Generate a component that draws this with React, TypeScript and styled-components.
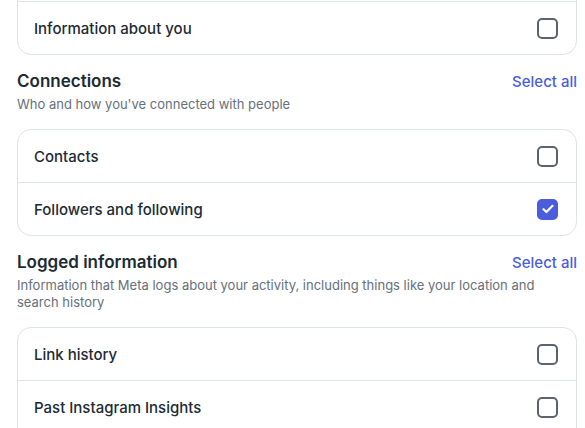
import React, { FC } from 'react'
import styled, { createGlobalStyle } from 'styled-components';

const GlobalStyle = createGlobalStyle`
    html, body {
        margin: 0;
        padding: 0;
        background: #ffffff;
        overflow: hidden;
    }
    body {
        font-family: Inter, "Noto Sans", "Liberation Sans", sans-serif;
        color: #1c2b33;
        -webkit-font-smoothing: antialiased;
    }
`

/* layout */
const Page = styled.div`
    display: flex;
    flex-direction: column;
    padding: 0 8px 0 17px;
`
const Card = styled.div<{ $pulled?: boolean }>`
    display: flex;
    flex-direction: column;
    border: 1px solid #dee3e9;
    border-radius: 14px;
    margin-top: ${p => p.$pulled ? '-52px' : '0'};
    margin-bottom: 15px;
    overflow: hidden;
`
const Row = styled.label`
    display: flex;
    align-items: center;
    justify-content: space-between;
    height: 52px;
    padding: 0 18px 0 16px;
    border-bottom: 1px solid #dee3e9;
    &:last-child {
        border-bottom: none;
    }
`
const RowLabel = styled.span`
    font-size: 15px;
    font-weight: 500;
    color: #1c2b33;
`
const Box = styled.span<{ $checked?: boolean }>`
    display: flex;
    align-items: center;
    justify-content: center;
    box-sizing: border-box;
    width: 21px;
    height: 21px;
    border-radius: 5px;
    border: 2px solid ${p => p.$checked ? '#4a5ddc' : '#5c636e'};
    background: ${p => p.$checked ? '#4a5ddc' : '#ffffff'};
`
/* section header */
const Header = styled.div`
    display: flex;
    flex-direction: column;
    gap: 4px;
    margin-bottom: 16px;
`
const TitleLine = styled.div`
    display: flex;
    align-items: center;
    justify-content: space-between;
`
const Title = styled.h2`
    margin: 0;
    font-size: 17px;
    line-height: 22px;
    font-weight: 600;
    color: #1c2b33;
`
const SelectAll = styled.button`
    border: none;
    background: none;
    padding: 0;
    font-family: inherit;
    font-size: 15px;
    font-weight: 500;
    color: #4a5ddc;
    cursor: pointer;
`
const Desc = styled.p`
    margin: 0;
    font-size: 13px;
    line-height: 17px;
    color: #65707b;
    padding-right: 30px;
`
/* _________________________________________ */

interface TypeItem {
    label: string
    checked?: boolean
}

const Check: FC<{ checked?: boolean }> = ({ checked }) => (
    <Box $checked={checked}>
        {checked &&
            <svg width="12" height="10" viewBox="0 0 12 10" fill="none">
                <path d="M1.5 5.2 4.4 8 10.5 1.8" stroke="#fff" strokeWidth="2.2" strokeLinecap="round" strokeLinejoin="round" />
            </svg>}
    </Box>
)

const Item: FC<TypeItem> = ({ label, checked }) => (
    <Row>
        <RowLabel>{label}</RowLabel>
        <Check checked={checked} />
    </Row>
)

const Section: FC<{ title: string, desc: string, items: TypeItem[] }> = ({ title, desc, items }) => (
    <>
        <Header>
            <TitleLine>
                <Title>{title}</Title>
                <SelectAll>Select all</SelectAll>
            </TitleLine>
            <Desc>{desc}</Desc>
        </Header>
        <Card>
            {items.map(i => <Item key={i.label} {...i} />)}
        </Card>
    </>
)

const App: FC = () => {
    return (
        <Page>
            <GlobalStyle />
            <Card $pulled>
                <Item label="Your activity across Meta technologies" />
                <Item label="Information about you" />
            </Card>
            <Section
                title="Connections"
                desc="Who and how you've connected with people"
                items={[
                    { label: 'Contacts' },
                    { label: 'Followers and following', checked: true },
                ]}
            />
            <Section
                title="Logged information"
                desc="Information that Meta logs about your activity, including things like your location and search history"
                items={[
                    { label: 'Link history' },
                    { label: 'Past Instagram Insights' },
                    { label: 'Search history' },
                ]}
            />
        </Page>
    )
}

export default App
